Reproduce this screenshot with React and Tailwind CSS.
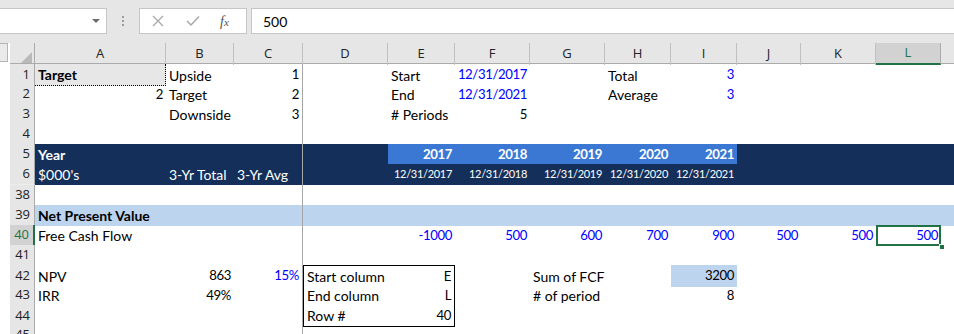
import React from "react";

const COLS = "grid grid-cols-[35px_131px_68px_69px_85px_67px_75px_75px_66px_66px_64px_75px_65px_13px]";
const LETTERS = ["A", "B", "C", "D", "E", "F", "G", "H", "I", "J", "K", "L", ""];

// cell: {t: text, r: right align (numbers), cls: extra classes}
const C = (t, r = false, cls = "") => ({ t, r, cls });
const E = () => ({ t: "" });
const D6 = (t) => ({ t, r: true, small: true, cls: navy });

const blue = "text-[#0000ff]";
const navy = "bg-[#14305a] text-white";
const band = "bg-[#3b78d4] text-white font-bold";
const lightBlue = "bg-[#bdd4ef]";

const rows = [
  {
    n: 1,
    cells: [
      C("Target", false, "font-bold bg-[#e7e7e7] border-r border-b border-dotted border-black"),
      C("Upside"), C("1", true), E(), C("Start"), C("12/31/2017", true, blue), E(),
      C("Total"), C("3", true, blue), E(), E(), E(), E(),
    ],
  },
  {
    n: 2,
    cells: [
      C("2", true), C("Target"), C("2", true), E(), C("End"), C("12/31/2021", true, blue), E(),
      C("Average"), C("3", true, blue), E(), E(), E(), E(),
    ],
  },
  {
    n: 3,
    cells: [
      E(), C("Downside"), C("3", true), E(), C("# Periods"), C("5", true), E(),
      E(), E(), E(), E(), E(), E(),
    ],
  },
  { n: 4, cells: Array.from({ length: 13 }, E) },
  {
    n: 5,
    cells: [
      C("Year", false, navy + " font-bold"), C("", false, navy), C("", false, navy), C("", false, navy),
      C("2017", true, band), C("2018", true, band), C("2019", true, band), C("2020", true, band), C("2021", true, band),
      C("", false, navy), C("", false, navy), C("", false, navy), C("", false, navy),
    ],
  },
  {
    n: 6,
    cells: [
      C("$000's", false, navy), C("3-Yr Total", false, navy), C("3-Yr Avg", false, navy), C("", false, navy),
      D6("12/31/2017"), D6("12/31/2018"), D6("12/31/2019"), D6("12/31/2020"), D6("12/31/2021"),
      C("", false, navy), C("", false, navy), C("", false, navy), C("", false, navy),
    ],
  },
];

const rowsBottom = [
  { n: 38, cells: Array.from({ length: 13 }, E) },
  {
    n: 39,
    cells: [
      C("Net Present Value", false, lightBlue + " font-bold"),
      ...Array.from({ length: 12 }, () => C("", false, lightBlue)),
    ],
  },
  {
    n: 40,
    sel: true,
    cells: [
      C("Free Cash Flow"), E(), E(), E(), C("-1000", true, blue), C("500", true, blue), C("600", true, blue),
      C("700", true, blue), C("900", true, blue), C("500", true, blue), C("500", true, blue),
      C("500", true, blue + " outline-2 outline-[#217346] -outline-offset-2"), E(),
    ],
  },
  { n: 41, cells: Array.from({ length: 13 }, E) },
  {
    n: 42,
    cells: [
      C("NPV"), C("863", true), C("15%", true, blue), C("Start column", false, "border-l border-t border-black"),
      C("E", true, "border-r border-t border-black"), E(), C("Sum of FCF"), E(), C("3200", true, lightBlue),
      E(), E(), E(), E(),
    ],
  },
  {
    n: 43,
    cells: [
      C("IRR"), C("49%", true), E(), C("End column", false, "border-l border-black"),
      C("L", true, "border-r border-black"), E(), C("# of period"), E(), C("8", true),
      E(), E(), E(), E(),
    ],
  },
  {
    n: 44,
    cells: [
      E(), E(), E(), C("Row #", false, "border-l border-b border-black"),
      C("40", true, "border-r border-b border-black"), E(), E(), E(), E(),
      E(), E(), E(), E(),
    ],
  },
  { n: 45, cells: Array.from({ length: 13 }, E) },
];

const Row = ({ n, cells, sel }) => (
  <div className={COLS + " h-[20px]"}>
    <div className="flex h-full">
      <div className="w-[10px] bg-white" />
      <div
        className={
          "w-[25px] flex items-center justify-end pr-[4px] text-[13px] border-b border-[#ececec] " +
          (sel
            ? "bg-[#d2d2d2] text-[#217346] border-r-2 border-r-[#217346]"
            : "bg-[#e6e6e6] text-[#222] border-r border-r-[#ababab]")
        }
        style={{ fontFamily: "'Open Sans', sans-serif" }}
      >
        {n}
      </div>
    </div>
    {cells.map((c, i) => (
      <div
        key={i}
        className={
          "relative flex items-center whitespace-nowrap overflow-visible h-full px-[3px] " +
          (c.small
            ? "justify-end text-[11px] tracking-[-0.3px] "
            : c.r
            ? "justify-end text-[13.2px] tracking-[-0.4px] "
            : "justify-start ") +
          (i === 2 ? "border-r border-r-[#a6a6a6] " : "") +
          (c.cls || "")
        }
      >
        {c.t}
        {sel && i === 11 && (
          <span className="absolute right-[-4px] bottom-[-4px] w-[6px] h-[6px] bg-[#217346] border border-white" />
        )}
      </div>
    ))}
  </div>
);

export default function App() {
  return (
    <div
      className="w-[954px] h-[334px] overflow-hidden bg-white text-[14px] text-black"
      style={{ fontFamily: "Lato, 'Liberation Sans', sans-serif" }}
    >
      {/* formula bar */}
      <div className="h-[43px] bg-[#e6e6e6] flex items-start pt-[8px]">
        <div className="w-[107px] h-[26px] bg-white border border-[#c6c6c6] border-l-0 flex items-center justify-end pr-[6px]">
          <span className="w-0 h-0 border-l-[4px] border-r-[4px] border-t-[4px] border-l-transparent border-r-transparent border-t-[#6b6b6b]" />
        </div>
        <div className="w-[32px] h-[26px] flex flex-col items-center justify-center gap-[2px]">
          <span className="w-[2px] h-[2px] bg-[#9c9c9c]" />
          <span className="w-[2px] h-[2px] bg-[#9c9c9c]" />
          <span className="w-[2px] h-[2px] bg-[#9c9c9c]" />
        </div>
        <div className="w-[108px] h-[26px] bg-white border border-[#c6c6c6] flex items-center">
          <svg width="12" height="12" viewBox="0 0 12 12" className="ml-[12px]">
            <path d="M1 1 L11 11 M11 1 L1 11" stroke="#a8a8a8" strokeWidth="1.3" fill="none" />
          </svg>
          <svg width="14" height="12" viewBox="0 0 14 12" className="ml-[22px]">
            <path d="M1 6 L5 10 L13 1.5" stroke="#a8a8a8" strokeWidth="1.5" fill="none" />
          </svg>
          <span
            className="ml-[20px] italic text-[#555] text-[14px]"
            style={{ fontFamily: "'Liberation Serif', serif" }}
          >
            f<span className="text-[11px]">x</span>
          </span>
        </div>
        <div className="ml-[4px] flex-1 h-[26px] bg-white border border-[#c6c6c6] border-r-0 flex items-center pl-[11px] text-[14px]">
          500
        </div>
      </div>

      {/* column headers */}
      <div
        className={COLS + " h-[21px] bg-[#e6e6e6] border-b border-[#ababab] text-[13px] text-[#222]"}
        style={{ fontFamily: "'Open Sans', sans-serif" }}
      >
        <div className="flex h-full">
          <div className="w-[10px] bg-white">
            <div className="w-[8px] h-[19px] border border-[#b5b5b5] border-l-0 bg-[#eaeaea]" />
          </div>
          <div className="w-[25px] flex items-end justify-end border-r border-[#ababab] pr-[2px] pb-[2px]">
            <span className="w-0 h-0 border-l-[11px] border-b-[11px] border-l-transparent border-b-[#b9b9b9]" />
          </div>
        </div>
        {LETTERS.map((l, i) => (
          <div
            key={i}
            className={
              "flex items-center justify-center " +
              (l === "L"
                ? "bg-[#d2d2d2] text-[#217346] border-b-2 border-b-[#217346] border-r border-r-[#ababab]"
                : l
                ? "border-r border-[#c0c0c0]"
                : "")
            }
          >
            {l}
          </div>
        ))}
      </div>

      {rows.map((r) => (
        <Row key={r.n} {...r} />
      ))}
      <div className="h-[1px] bg-[#a6a6a6]" />
      {rowsBottom.map((r) => (
        <Row key={r.n} {...r} />
      ))}
    </div>
  );
}
